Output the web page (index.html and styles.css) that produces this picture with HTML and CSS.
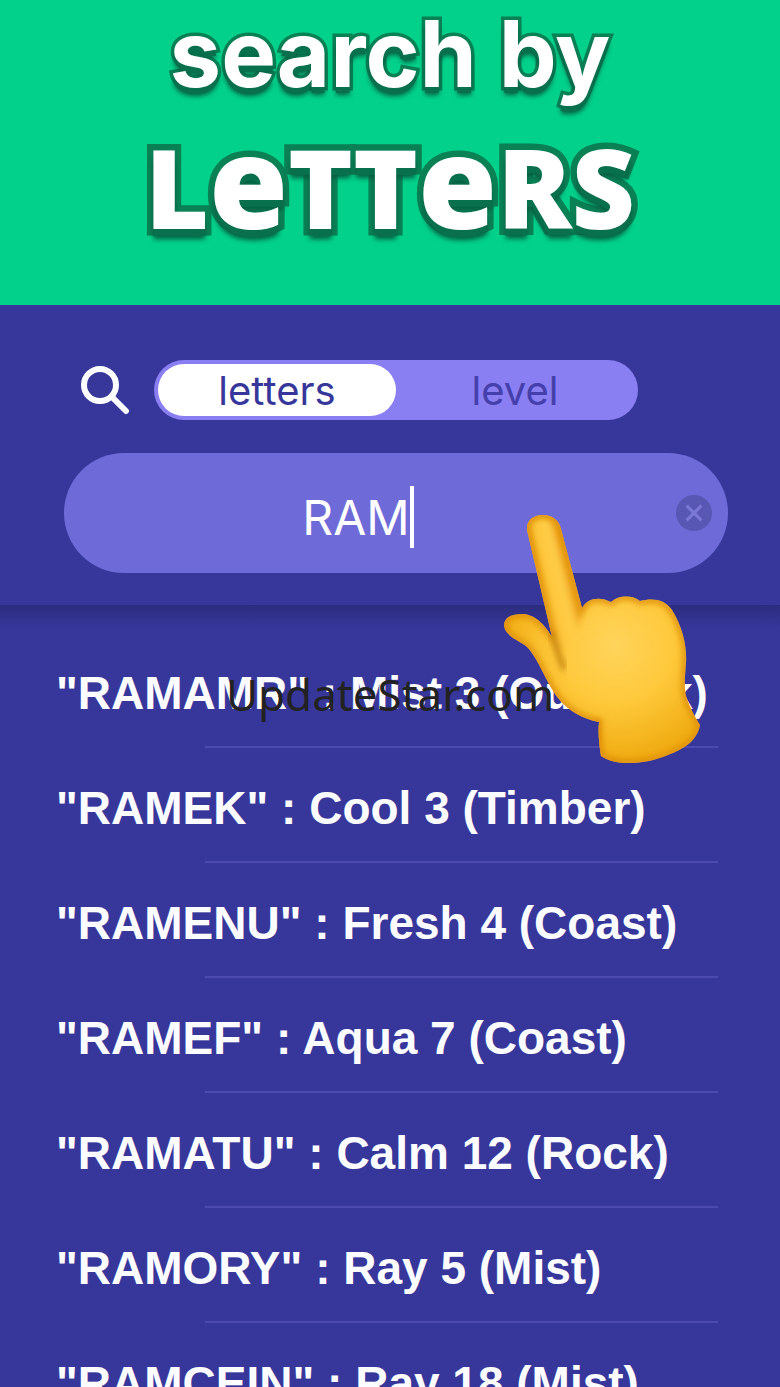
FILE: index.html
```html
<!DOCTYPE html>
<html lang="en">
<head>
    <meta charset="utf-8">
    <meta name="viewport" content="width=device-width, initial-scale=1">
    <title>Search by letters</title>
    <link rel="stylesheet" href="styles.css">
</head>
<body>
    <header class="banner">
        <h1>
            <span class="banner-top">search by</span>
            <span class="banner-main">L<span class="big-e">e</span>TT<span class="big-e">e</span>RS</span>
        </h1>
    </header>

    <main class="app">
        <form class="search">
            <div class="search-mode">
                <svg class="search-icon" viewBox="0 0 50 50" aria-hidden="true">
                    <circle cx="20" cy="20" r="16"/>
                    <path d="M32 32L46 46"/>
                </svg>
                <div class="toggle">
                    <button type="button" class="active">letters</button>
                    <button type="button">level</button>
                </div>
            </div>
            <div class="search-box">
                <div class="search-field">
                    <input type="text" value="RAM" aria-label="Letters">
                    <span class="caret"></span>
                </div>
                <button type="button" class="clear" aria-label="Clear">
                    <svg viewBox="0 0 34 34">
                        <circle cx="17" cy="17" r="17"/>
                        <path d="M10 10L24 24M24 10L10 24"/>
                    </svg>
                </button>
            </div>
            <!-- pointing hand over the search box -->
            <svg class="hand" viewBox="0 0 240 280" aria-hidden="true">
                <defs>
                    <radialGradient id="skin" gradientUnits="userSpaceOnUse" cx="135" cy="145" r="115">
                        <stop offset="0" stop-color="#ffd45c"/>
                        <stop offset="0.5" stop-color="#fec93c"/>
                        <stop offset="1" stop-color="#f0ac12"/>
                    </radialGradient>
                    <linearGradient id="finger" gradientUnits="userSpaceOnUse" x1="57" y1="75" x2="89" y2="67">
                        <stop offset="0" stop-color="#eba31a"/>
                        <stop offset="0.25" stop-color="#fec63a"/>
                        <stop offset="0.7" stop-color="#ffce4a"/>
                        <stop offset="1" stop-color="#e8960e"/>
                    </linearGradient>
                    <filter id="soft" x="-20%" y="-20%" width="140%" height="140%">
                        <feGaussianBlur stdDeviation="3"/>
                    </filter>
                    <clipPath id="shape">
                        <path id="outline" d="M47 30C46 20 54 15 63 15C72 15 79 20 81 29L102 108C107 98 120 96 131 102C139 95 152 95 160 101C173 98 184 99 192 110C203 128 207 147 206 163C205 174 204 187 206 196C209 206 215 217 220 225C217 241 204 249 188 255C167 264 137 267 121 256C119 244 118 233 119 222C103 219 88 211 78 198C65 181 58 157 46 146C36 139 26 136 24 126C24 116 33 114 43 114C57 115 66 127 72 137L47 30Z"/>
                    </clipPath>
                </defs>
                <g clip-path="url(#shape)">
                    <rect width="240" height="280" fill="url(#skin)"/>
                    <path d="M47 30C46 20 54 15 63 15C72 15 79 20 81 29L102 112L94 150L77 150Z" fill="url(#finger)" filter="url(#soft)"/>
                    <use href="#outline" fill="none" stroke="#dc8b08" stroke-width="6" filter="url(#soft)"/>
                    <path d="M119 222C113 240 118 250 121 258" fill="none" stroke="#e5940d" stroke-width="8" filter="url(#soft)"/>
                    <path d="M71 132L84 170" fill="none" stroke="#b36e09" stroke-width="4" filter="url(#soft)"/>
                </g>
            </svg>
        </form>

        <div class="results">
            <ul>
                <li>"RAMAMR" : Mist 3 (Outback)</li>
                <li>"RAMEK" : Cool 3 (Timber)</li>
                <li>"RAMENU" : Fresh 4 (Coast)</li>
                <li>"RAMEF" : Aqua 7 (Coast)</li>
                <li>"RAMATU" : Calm 12 (Rock)</li>
                <li>"RAMORY" : Ray 5 (Mist)</li>
                <li>"RAMCEIN" : Ray 18 (Mist)</li>
            </ul>
        </div>
    </main>

    <div class="watermark">UpdateStar.com</div>
</body>
</html>
```
FILE: styles.css
```css
* {
    box-sizing: border-box;
}

body {
    margin: 0;
    height: 100vh;
    display: flex;
    flex-direction: column;
    overflow: hidden;
    position: relative;
    background: #37379b;
    color: #fbfcff;
    font-family: "Liberation Sans", Arial, sans-serif;
}

/* banner */

.banner {
    flex: none;
    padding: 0 16px 41px;
    background: #02d18b;
    text-align: center;
}

.banner h1 {
    margin: 0;
    color: #fff;
}

.banner-top,
.banner-main {
    display: block;
    paint-order: stroke fill;
    white-space: nowrap;
}

.banner-top {
    font-family: Inter, sans-serif;
    font-size: 92px;
    line-height: 108px;
    -webkit-text-stroke: 7px #0a8055;
    text-shadow: 0 6px 0 #08704c, 0 8px 5px #075c40;
}

.banner-main {
    font-family: "Open Sans", "Noto Sans", sans-serif;
    font-weight: 800;
    font-size: 110px;
    line-height: 156px;
    -webkit-text-stroke: 13px #0a8055;
    text-shadow: 0 7px 0 #08704c, 0 10px 5px #075c40;
}

.big-e {
    font-size: 128px;
    line-height: 1px;
}

/* search area */

.app {
    flex: 1;
    min-height: 0;
}

.search {
    position: relative;
    height: 300px;
    padding: 55px 52px 0 64px;
}

.search-mode {
    display: flex;
    align-items: center;
    gap: 24px;
    padding-left: 16px;
}

.search-icon {
    width: 50px;
    height: 50px;
    fill: none;
    stroke: #fbfcff;
    stroke-width: 6px;
    stroke-linecap: round;
}

.toggle {
    display: flex;
    flex: 0 1 484px;
    height: 60px;
    padding: 4px;
    border-radius: 30px;
    background: #897ef2;
}

.toggle button {
    flex: 1;
    padding: 0;
    border: 0;
    border-radius: 26px;
    background: none;
    color: #453fab;
    font-family: Inter, sans-serif;
    font-size: 40px;
}

.toggle .active {
    background: #fff;
    color: #37379b;
}

.search-box {
    display: flex;
    align-items: center;
    height: 120px;
    margin-top: 33px;
    padding-right: 16px;
    border-radius: 60px;
    background: #6e6bd8;
}

.search-field {
    flex: 1;
    display: flex;
    align-items: center;
    justify-content: center;
    padding: 8px 24px 0 0;
}

.search-field input {
    field-sizing: content;
    padding: 0;
    border: 0;
    outline: none;
    background: none;
    color: #fff;
    font-family: Inter, sans-serif;
    font-size: 48px;
}

.caret {
    width: 4px;
    height: 62px;
    background: #fff;
}

.clear {
    width: 36px;
    height: 36px;
    padding: 0;
    border: 0;
    background: none;
}

.clear svg {
    display: block;
    fill: #5957b4;
    stroke-width: 3px;
}

.clear path {
    stroke: #7a78d4;
}

.hand {
    position: absolute;
    z-index: 1;
    top: 195px;
    left: 480px;
    width: 240px;
    height: 280px;
}

/* results */

.results {
    background: linear-gradient(#2c2c7f, #37379b 24px);
}

.results ul {
    margin: 0;
    padding: 28px 62px 0 56px;
    list-style: none;
}

.results li {
    height: 115px;
    font-size: 46px;
    font-weight: bold;
    line-height: 120px;
    white-space: nowrap;
    background: linear-gradient(#4c4aae, #4c4aae) right bottom / calc(100% - 149px) 2px no-repeat;
}

.watermark {
    position: absolute;
    z-index: 2;
    inset: 0;
    display: flex;
    align-items: center;
    justify-content: center;
    color: #222;
    font-family: "Noto Sans", sans-serif;
    font-size: 44px;
    pointer-events: none;
}
```
